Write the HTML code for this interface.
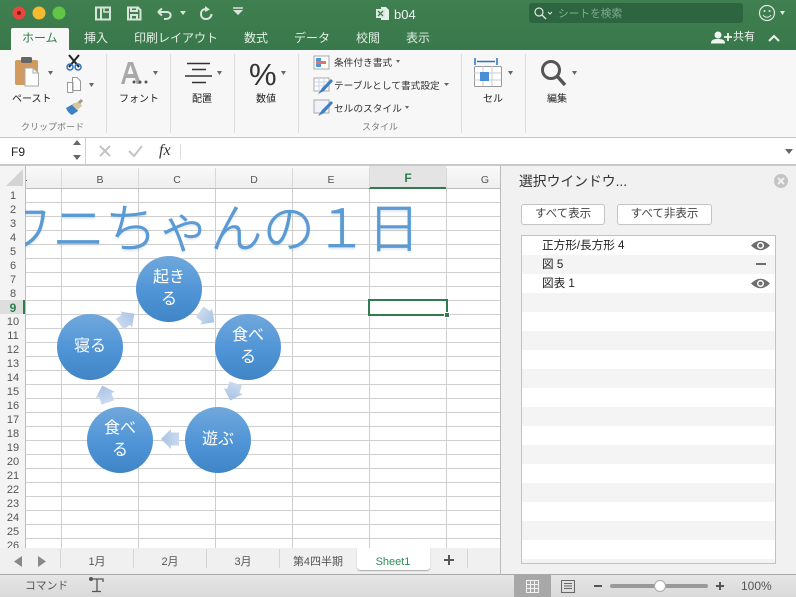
<!DOCTYPE html>
<html><head><meta charset="utf-8"><style>
html,body{margin:0;padding:0}
body{width:796px;height:597px;overflow:hidden;position:relative;background:#fff;font-family:"Liberation Sans","Noto Sans CJK JP",sans-serif}
.t{position:absolute;white-space:nowrap;line-height:1}
.a{position:absolute}
.c{transform:translateX(-50%)}
.tab{color:#e4eee6;font-size:12px;top:32px}
.lb{color:#222;font-size:10px;top:96px}
.gl{color:#777;font-size:9px;top:123px}
.ch{color:#555;font-size:10.500px;top:175px}
.rn{color:#555;font-size:11px;width:20px;text-align:center;left:3px}
.st{color:#333;font-size:9.700px;top:59px}
.sh{color:#555;font-size:11px;top:558px}
.pl{color:#222;font-size:11.600px;left:542px}
.btn{position:absolute;top:204px;height:21px;background:#fff;border:1px solid #c4c4c4;border-radius:3px;box-sizing:border-box;text-align:center;font-size:11.500px;line-height:18px;color:#444}
.ci{position:absolute;width:66px;height:66px;border-radius:50%;background:linear-gradient(#70a8dc,#4f94d6 55%,#4085c6);color:#fff;font-size:16px;line-height:22px;text-align:center;display:flex;align-items:center;justify-content:center}
</style></head><body>

<!-- title bar -->
<div class="a" style="left:0;top:0;width:796px;height:50px;background:linear-gradient(#3f7f50,#38784a)"></div>
<!-- ribbon -->
<div class="a" style="left:0;top:50px;width:796px;height:87px;background:#f7f7f7"></div>
<div class="a" style="left:0;top:137px;width:796px;height:1px;background:#c6c6c6"></div>
<!-- formula bar -->
<div class="a" style="left:0;top:138px;width:796px;height:26px;background:#fff"></div>
<div class="a" style="left:0;top:164px;width:796px;height:2px;background:#c9c9c9"></div>
<div class="a" style="left:85px;top:138px;width:1px;height:26px;background:#d0d0d0"></div>
<div class="a" style="left:180px;top:144px;width:1px;height:15px;background:#ddd"></div>

<!-- grid -->
<div class="a" style="left:25px;top:189px;width:475px;height:359px;background-color:#fff;background-image:repeating-linear-gradient(to bottom,transparent 0,transparent 13px,#cfcfcf 13px,#cfcfcf 14px)"></div>
<div class="a" style="left:61px;top:189px;width:439px;height:359px;background-image:repeating-linear-gradient(to right,#cfcfcf 0,#cfcfcf 1px,transparent 1px,transparent 77px)"></div>
<div class="a" style="left:0;top:166px;width:500px;height:22px;background:linear-gradient(#fafafa,#eee);border-bottom:1px solid #bdbdbd"></div>
<div class="a" style="left:0;top:166px;width:25px;height:382px;background:#f4f4f4;border-right:1px solid #bdbdbd"></div>
<div class="a" style="left:369px;top:166px;width:77px;height:21px;background:#e4e4e4;border-bottom:2px solid #2f7d4d"></div>
<div class="a" style="left:0;top:300px;width:25px;height:14px;background:#dedede;border-right:2px solid #2f7d4d;box-sizing:border-box"></div>
<svg class="a" style="left:0;top:166px" width="500" height="23"><path d="M23 3V20H6Z" fill="#d4d4d4"/><g stroke="#d8d8d8"><path d="M61.500 2V22M138.500 2V22M215.500 2V22M292.500 2V22M369.500 2V22M446.500 2V22"/></g></svg>

<!-- column headers -->
<div class="t" style="left:25px;top:174px;font-size:10px;color:#555">.</div>
<div class="t ch c" style="left:100px">B</div>
<div class="t ch c" style="left:177px">C</div>
<div class="t ch c" style="left:254px">D</div>
<div class="t ch c" style="left:331px">E</div>
<div class="t ch c" style="left:408px;font-weight:bold;color:#2f7d4d;font-size:12px;top:172px">F</div>
<div class="t ch c" style="left:485px">G</div>

<!-- row numbers -->
<div class="t rn" style="top:191px">1</div><div class="t rn" style="top:205px">2</div><div class="t rn" style="top:219px">3</div><div class="t rn" style="top:233px">4</div><div class="t rn" style="top:247px">5</div><div class="t rn" style="top:261px">6</div><div class="t rn" style="top:275px">7</div><div class="t rn" style="top:289px">8</div><div class="t rn" style="top:302px;font-weight:bold;color:#2f7d4d;font-size:12px">9</div><div class="t rn" style="top:317px">10</div><div class="t rn" style="top:331px">11</div><div class="t rn" style="top:345px">12</div><div class="t rn" style="top:359px">13</div><div class="t rn" style="top:373px">14</div><div class="t rn" style="top:387px">15</div><div class="t rn" style="top:401px">16</div><div class="t rn" style="top:415px">17</div><div class="t rn" style="top:429px">18</div><div class="t rn" style="top:443px">19</div><div class="t rn" style="top:457px">20</div><div class="t rn" style="top:471px">21</div><div class="t rn" style="top:485px">22</div><div class="t rn" style="top:499px">23</div><div class="t rn" style="top:513px">24</div><div class="t rn" style="top:527px">25</div><div class="t rn" style="top:541px">26</div>

<!-- selected cell -->
<div class="a" style="left:368px;top:299px;width:80px;height:17px;border:2px solid #2f7d4d;box-sizing:border-box"></div>
<div class="a" style="left:444px;top:312px;width:6px;height:6px;background:#2f7d4d;border:1px solid #fff;box-sizing:border-box"></div>

<!-- word art title -->
<div class="a" style="left:25px;top:189px;width:475px;height:70px;overflow:hidden">
<div class="t" style="left:-25px;top:10px;font-size:52.500px;font-weight:300;color:#5b9bd5;-webkit-text-stroke:.7px #5b9bd5;font-family:'Noto Sans CJK JP',sans-serif;text-shadow:0 2px 2px rgba(120,150,190,.25)">ワニちゃんの１日</div>
</div>

<!-- smartart arrows -->
<svg class="a" style="left:0;top:0" width="500" height="548">
<defs><linearGradient id="ag"><stop offset="0" stop-color="#cbdaee"/><stop offset="1" stop-color="#a8c3e5"/></linearGradient></defs>
<g fill="url(#ag)">
<path d="M-9-6.500H-1V-10L9 0-1 10V6.500H-9Z" transform="translate(207,317) rotate(36)"/>
<path d="M-9-6.500H-1V-10L9 0-1 10V6.500H-9Z" transform="translate(233,392) rotate(108)"/>
<path d="M-9-6.500H-1V-10L9 0-1 10V6.500H-9Z" transform="translate(170,439) rotate(180)"/>
<path d="M-9-6.500H-1V-10L9 0-1 10V6.500H-9Z" transform="translate(105,394) rotate(252)"/>
<path d="M-9-6.500H-1V-10L9 0-1 10V6.500H-9Z" transform="translate(127,319) rotate(324)"/>
</g></svg>

<div class="ci" style="left:136px;top:256px"><span>起き<br>る</span></div>
<div class="ci" style="left:215px;top:314px"><span>食べ<br>る</span></div>
<div class="ci" style="left:185px;top:407px"><span>遊ぶ</span></div>
<div class="ci" style="left:87px;top:407px"><span>食べ<br>る</span></div>
<div class="ci" style="left:57px;top:314px"><span>寝る</span></div>

<!-- window controls -->
<svg class="a" style="left:0;top:0" width="796" height="138">
<circle cx="19" cy="13" r="6.500" fill="#e9463f"/><circle cx="19" cy="13" r="2" fill="#8a1a14"/>
<circle cx="39" cy="13" r="6.500" fill="#f6b92f"/>
<circle cx="59" cy="13" r="6.500" fill="#62c545"/>
<!-- qat -->
<g fill="none" stroke="#d8e5db" stroke-width="2">
<path d="M96 7.500H110V19.500H96ZM101 7.500V19.500"/>
<path d="M104 8V12H110" stroke-width="1.500"/>
<path d="M128 7.500H138L140.500 10V19.500H128Z"/>
<path d="M131 8V11H137V8M131 19V15H137V19"/>
<path d="M158 12H167C172 12 172 19 166 19H164M158 12L162 8.500M158 12L162 15.500"/>
<path d="M206 9C202 9 201 12 201 14C201 17 203 19 206 19C209 19 211.500 17 211.500 14"/>
</g>
<path d="M180 11H186L183 15Z M205 6L210 9.500 205 12Z M233 10H243L238 15Z" fill="#d8e5db"/>
<path d="M233 8H243" stroke="#d8e5db" stroke-width="1.500"/>
<!-- doc icon -->
<path d="M381 7H386L389 10V20H381Z" fill="#e9efe9"/><rect x="376" y="9" width="9" height="9" fill="#dfe9e0"/><path d="M378 11L383 16M383 11L378 16" stroke="#3a7a4a" stroke-width="1.300"/>
<!-- search -->
<rect x="529" y="3" width="214" height="20" rx="3" fill="#2d6541"/>
<circle cx="539" cy="12" r="4" fill="none" stroke="#dfe9e2" stroke-width="1.200"/><path d="M542 15L546 19" stroke="#dfe9e2" stroke-width="1.300"/>
<path d="M548 12L550 14 552 12" fill="none" stroke="#dfe9e2"/>
<!-- smiley -->
<circle cx="767" cy="13" r="7.500" fill="none" stroke="#dfe9e2" stroke-width="1.200"/><circle cx="764.500" cy="11" r="1" fill="#dfe9e2"/><circle cx="769.500" cy="11" r="1" fill="#dfe9e2"/><path d="M763 15C765 18 769 18 771 15" fill="none" stroke="#dfe9e2"/>
<path d="M780 11H785L782.500 15Z" fill="#dfe9e2"/>
<!-- share -->
<circle cx="718" cy="35" r="3.500" fill="#f0f4f1"/><path d="M711 43.500C711 40 713 39 718 39S725 40 725 43.500Z" fill="#f0f4f1"/><path d="M724 37H732M728 33V41" stroke="#f0f4f1" stroke-width="1.800"/>
<path d="M769 41L774 36 779 41" fill="none" stroke="#f0f4f1" stroke-width="2"/>
<!-- active tab -->
<path d="M11 50V30Q11 28 13 28H67Q69 28 69 30V50Z" fill="#f7f7f7"/>
<!-- separators -->
<g fill="#dcdcdc"><rect x="106" y="54" width="1" height="79"/><rect x="170" y="54" width="1" height="79"/><rect x="234" y="54" width="1" height="79"/><rect x="298" y="54" width="1" height="79"/><rect x="461" y="54" width="1" height="79"/><rect x="525" y="54" width="1" height="79"/></g>
<!-- paste -->
<rect x="15" y="60" width="23" height="25" rx="2" fill="#d19a5f"/><rect x="21" y="57" width="11" height="6" rx="1.500" fill="#666"/>
<path d="M25 68H33L38.500 73V86H25Z" fill="#fff" stroke="#aaa"/>
<path d="M33 68V73H38" fill="none" stroke="#aaa"/>
<!-- cut -->
<path d="M69 55L79 67M79 55L69 67" stroke="#222" stroke-width="2"/><circle cx="70" cy="67" r="3" fill="none" stroke="#2f72c0" stroke-width="1.500"/><circle cx="78" cy="67" r="3" fill="none" stroke="#2f72c0" stroke-width="1.500"/>
<!-- copy -->
<path d="M67.500 82.500H73V92.500H67.500Z M72.500 77.500H77L80.500 81V90.500H72.500Z" fill="#fff" stroke="#999"/>
<!-- brush -->
<path d="M66 108L75 103 78 111 72 115Q68 113 66 108Z" fill="#3f7fc4"/><path d="M72 105L79 101 82 106 77 110Z" fill="#d9c89c"/><path d="M79 103L82 100" stroke="#999" stroke-width="3"/>
<!-- font -->
<path d="M121 84L128 62H133L141 84H136.500L135 78H126L124.500 84ZM127.500 74H133.500L130.500 65Z" fill="#a9a9a9"/>
<g fill="#555"><circle cx="134" cy="82" r="1.500"/><circle cx="140" cy="82" r="1.500"/><circle cx="146" cy="82" r="1.500"/></g>
<!-- align -->
<g stroke="#333" stroke-width="1.500"><path d="M187 63.500H210M192 69.500H206M185 76H212M192 82.500H206"/></g>
<!-- percent -->
<text x="249" y="85" font-size="31" fill="#333" font-family="Liberation Sans">%</text>
<!-- styles icons -->
<rect x="314" y="56" width="15" height="13" fill="#fff" stroke="#aaa"/><rect x="316" y="58" width="5" height="3" fill="#4f94d6"/><rect x="316" y="61" width="10" height="3" fill="#e0736e"/><rect x="316" y="64" width="5" height="3" fill="#4f94d6"/>
<rect x="314" y="78" width="15" height="13" fill="#fff" stroke="#aaa"/><path d="M314 82H329M314 86H329M319 78V91M324 78V91" stroke="#c5d5e8"/><path d="M318 94L322 88 331 79 333 81 324 91Z" fill="#3f7fc4"/>
<rect x="314" y="100" width="15" height="13" fill="#eef3fa" stroke="#aaa"/><path d="M318 116L322 110 331 101 333 103 324 113Z" fill="#3f7fc4"/>
<!-- cell -->
<path d="M475 58V65M497 58V65M477 61.500H495" stroke="#2f72c0" stroke-width="1.500"/>
<rect x="474.500" y="66.500" width="27" height="20" rx="1" fill="#fff" stroke="#999"/><path d="M474 73H501M474 80H501M483 66V86M492 66V86" stroke="#ccc"/><rect x="480" y="72" width="9" height="9" fill="#4a8fd6"/>
<!-- search large -->
<circle cx="551" cy="70" r="8.500" fill="none" stroke="#555" stroke-width="3"/><path d="M557 76L565 85" stroke="#555" stroke-width="3.500"/>
<!-- dropdowns -->
<g fill="#666"><path d="M48 71H53L50.500 75Z M89 83H94L91.500 87Z M153 71H158L155.500 75Z M217 71H222L219.500 75Z M281 71H286L283.500 75Z M396 60H400L398 63Z M444 83H449L446.500 86Z M405 106H409L407 109Z M508 71H513L510.500 75Z M572 71H577L574.500 75Z"/></g>
</svg>

<!-- formula bar content -->
<svg class="a" style="left:0;top:138px" width="796" height="26">
<path d="M73 7H81L77 2ZM73 17H81L77 22Z" fill="#666"/>
<path d="M100 8L110 18M110 8L100 18" stroke="#c4c4c4" stroke-width="2"/>
<path d="M129 13L134 18 142 8" stroke="#c4c4c4" stroke-width="2" fill="none"/>
<path d="M785 11H793L789 16Z" fill="#666"/>
</svg>
<div class="t" style="left:11px;top:146px;font-size:12px;color:#222">F9</div>
<div class="t" style="left:159px;top:143px;font-size:16px;color:#333;font-family:'Liberation Serif',serif;font-style:italic">fx</div>

<!-- tabs text -->
<div class="t" style="left:22px;top:32px;font-size:12px;color:#2f7d4d">ホーム</div>
<div class="t tab" style="left:84px">挿入</div>
<div class="t tab" style="left:134px">印刷レイアウト</div>
<div class="t tab" style="left:244px">数式</div>
<div class="t tab" style="left:294px">データ</div>
<div class="t tab" style="left:356px">校閲</div>
<div class="t tab" style="left:406px">表示</div>
<div class="t" style="left:733px;top:32px;font-size:11px;color:#f0f4f1">共有</div>
<div class="t" style="left:394px;top:8px;font-size:13px;color:#eef3ef">b04</div>
<div class="t" style="left:558px;top:9px;font-size:10.700px;color:#7fae8f">シートを検索</div>

<!-- ribbon labels -->
<div class="t lb" style="left:12px;top:95px">ペースト</div>
<div class="t lb" style="left:119px;top:95px">フォント</div>
<div class="t lb" style="left:192px;top:95px">配置</div>
<div class="t lb" style="left:256px;top:95px">数値</div>
<div class="t lb" style="left:483px;top:95px">セル</div>
<div class="t lb" style="left:547px;top:95px">編集</div>
<div class="t gl" style="left:21px">クリップボード</div>
<div class="t gl" style="left:362px">スタイル</div>
<div class="t st" style="left:334px">条件付き書式</div>
<div class="t st" style="left:334px;top:82px">テーブルとして書式設定</div>
<div class="t st" style="left:334px;top:105px">セルのスタイル</div>

<!-- panel -->
<div class="a" style="left:500px;top:166px;width:296px;height:408px;background:#f1f1f1;border-left:1px solid #bbb;box-sizing:border-box"></div>
<div class="t" style="left:519px;top:175px;font-size:13.800px;color:#333">選択ウインドウ...</div>
<svg class="a" style="left:772px;top:173px" width="18" height="16"><circle cx="9" cy="8" r="7" fill="#c4c4c4"/><path d="M6 5L12 11M12 5L6 11" stroke="#f1f1f1" stroke-width="2"/></svg>
<div class="btn" style="left:521px;width:84px">すべて表示</div>
<div class="btn" style="left:617px;width:95px">すべて非表示</div>
<div class="a" style="left:521px;top:235px;width:255px;height:329px;border:1px solid #c2c2c2;box-sizing:border-box;background:repeating-linear-gradient(to bottom,#fff 0,#fff 19px,#f4f4f4 19px,#f4f4f4 38px)"></div>
<div class="t pl" style="top:240px">正方形/長方形 4</div>
<div class="t pl" style="top:259px">図 5</div>
<div class="t pl" style="top:278px">図表 1</div>
<svg class="a" style="left:750px;top:238px" width="22" height="56">
<path d="M1 7.500Q10.500-2 20 7.500Q10.500 17 1 7.500Z" fill="#6e6e6e"/><circle cx="10.500" cy="7.500" r="3.500" fill="#fff"/><circle cx="10.500" cy="7.500" r="2" fill="#6e6e6e"/>
<rect x="6" y="25" width="10" height="2" fill="#6e6e6e"/>
<path d="M1 45.500Q10.500 36 20 45.500Q10.500 55 1 45.500Z" fill="#6e6e6e"/><circle cx="10.500" cy="45.500" r="3.500" fill="#fff"/><circle cx="10.500" cy="45.500" r="2" fill="#6e6e6e"/>
</svg>

<!-- sheet tabs -->
<div class="a" style="left:0;top:548px;width:500px;height:26px;background:#f0f0f0"></div>
<div class="a" style="left:357px;top:548px;width:73px;height:22px;background:#fff;border-radius:0 0 3px 3px;box-shadow:0 1px 1px #aaa"></div>
<svg class="a" style="left:0;top:548px" width="500" height="26"><path d="M22 8V19L14 13.500ZM38 8V19L46 13.500Z" fill="#888"/><path d="M60.500 1V20M133.500 1V20M206.500 1V20M279.500 1V20M467.500 1V20" stroke="#d4d4d4"/><path d="M449 7V17M444 12H454" stroke="#555" stroke-width="2"/></svg>
<div class="t sh c" style="left:97px;top:557px">1月</div>
<div class="t sh c" style="left:170px;top:557px">2月</div>
<div class="t sh c" style="left:243px;top:557px">3月</div>
<div class="t sh c" style="left:318px;top:557px">第4四半期</div>
<div class="t sh c" style="left:393px;top:557px;color:#2f8a5b">Sheet1</div>

<!-- status bar -->
<div class="a" style="left:0;top:574px;width:796px;height:23px;background:linear-gradient(#e6e6e6,#d9d9d9);border-top:1px solid #a9a9a9;box-sizing:border-box"></div>
<div class="a" style="left:514px;top:575px;width:37px;height:22px;background:#a8a8a8"></div>
<div class="t" style="left:25px;top:581px;font-size:10.800px;color:#555">コマンド</div>
<svg class="a" style="left:0;top:574px" width="796" height="23">
<path d="M91 5H103V8M97 5V17.500M92 17.500H101" fill="none" stroke="#555" stroke-width="1.300"/><circle cx="91" cy="5" r="2" fill="#555"/>
<path d="M526.500 6.500H538.500V18.500H526.500ZM526 10.500H539M526 14.500H539M530.500 6V19M534.500 6V19" fill="none" stroke="#f2f2f2"/>
<rect x="561.500" y="6.500" width="13" height="12" fill="none" stroke="#666"/><path d="M564 9.500H572M564 12H572M564 14.500H572" stroke="#666"/>
<rect x="594" y="11" width="8" height="2" fill="#555"/>
<rect x="610" y="10" width="98" height="4" rx="2" fill="#999"/>
<circle cx="660" cy="12" r="5.500" fill="#fff" stroke="#aaa"/>
<path d="M716 12H724M720 8V16" stroke="#555" stroke-width="2"/>
</svg>
<div class="t" style="left:741px;top:580px;font-size:12px;color:#555">100%</div>
</body></html>
